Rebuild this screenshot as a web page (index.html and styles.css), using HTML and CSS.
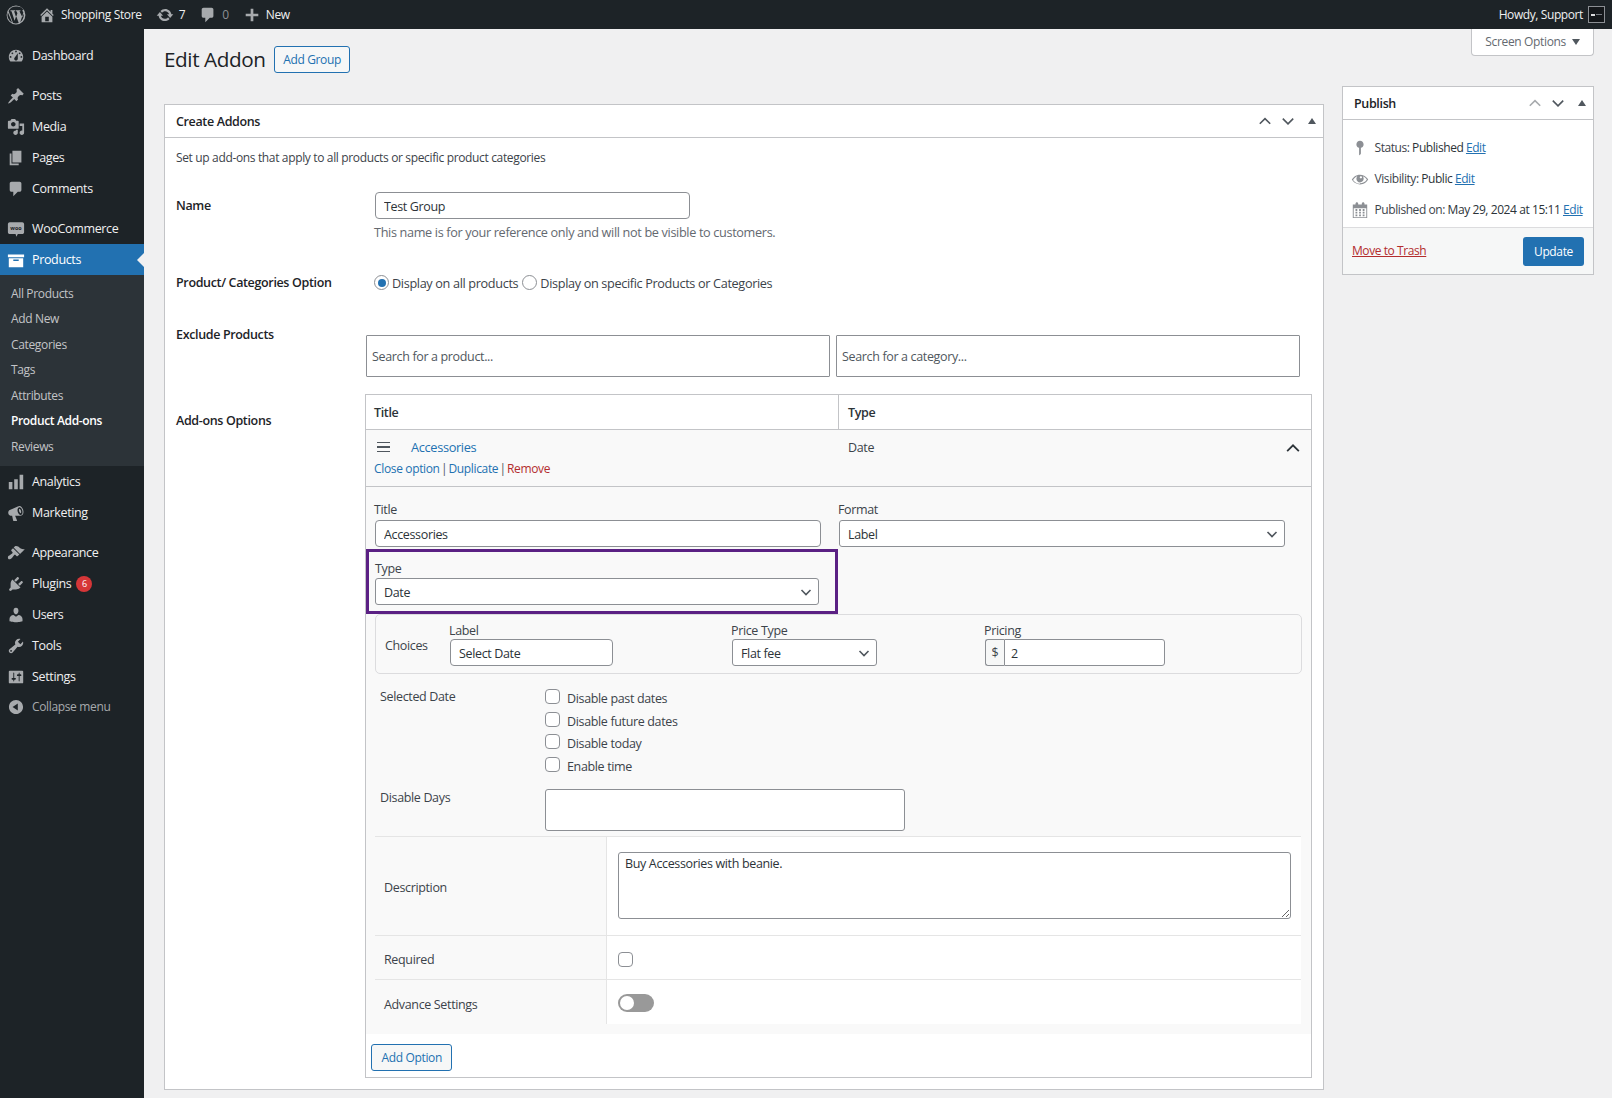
FILE: index.html
```html
<!DOCTYPE html>
<html lang="en">
<head>
  <meta charset="UTF-8">
  <meta name="viewport" content="width=device-width, initial-scale=1.0">
  <title>Edit Addon</title>
  <link rel="stylesheet" href="styles.css">
</head>
<body>

<!-- icon sprite -->
<svg class="sprite" xmlns="http://www.w3.org/2000/svg">
  <symbol id="i-wp" viewBox="0 0 20 20"><path fill-rule="evenodd" d="M10 .6a9.4 9.4 0 1 1 0 18.8A9.4 9.4 0 0 1 10 .6zm0 1A8.4 8.4 0 0 0 2.6 6l4.4 12a8.4 8.4 0 0 0 3 .4 8.4 8.4 0 0 0 2.700-.5L10.200 11l-1.600 4.700L5.500 6.300l-1-.1v-.9h4.600v.9l-1 .1 2 5.900 1.300-3.900-.9-2-.8-.1v-.9h4.700v.9l-1 .1 3 5.900 1-3.200c.4-1.400-.6-2.300-.9-2.900-.3-.6.100-1.700 1.100-1.700A8.400 8.400 0 0 0 10 1.600zm7 5.400c.2 1.300-.1 2.400-.5 3.600l-2.300 6.600A8.400 8.400 0 0 0 17 7zM1.900 7.400a8.400 8.400 0 0 0 4.200 10z"/></symbol>
  <symbol id="i-home" viewBox="0 0 20 20"><path d="M16 8.500l1.530 1.530-1.060 1.060L10 4.620l-6.470 6.470-1.060-1.060L10 2.500l4 4v-2h2v4zm-6-2.460l6 5.990V18H4v-5.970zM12 17v-5H8v5h4z"/></symbol>
  <symbol id="i-update" viewBox="0 0 20 20"><path d="M10.200 3.280c3.530 0 6.430 2.610 6.920 6h2.080l-3.500 4-3.500-4h2.320c-.45-1.970-2.210-3.450-4.320-3.450-1.450 0-2.730.71-3.540 1.780L4.950 5.660C6.230 4.200 8.110 3.280 10.200 3.280zm-.4 13.440c-3.520 0-6.430-2.610-6.920-6H.8l3.500-4c1.170 1.330 2.330 2.670 3.500 4H5.480c.45 1.970 2.210 3.450 4.320 3.450 1.450 0 2.730-.71 3.540-1.780l1.710 1.950c-1.280 1.460-3.150 2.380-5.250 2.380z"/></symbol>
  <symbol id="i-comment" viewBox="0 0 20 20"><path d="M5 2h9c1.100 0 2 .9 2 2v7c0 1.100-.9 2-2 2h-2l-5 5v-5H5c-1.100 0-2-.9-2-2V4c0-1.100.9-2 2-2z"/></symbol>
  <symbol id="i-plus" viewBox="0 0 20 20"><path d="M17 8.500v3h-5.500V17h-3v-5.500H3v-3h5.500V3h3v5.500z"/></symbol>
  <symbol id="i-dashboard" viewBox="0 0 20 20"><path fill-rule="evenodd" d="M3.760 16h12.480c1.100-1.370 1.760-3.110 1.760-5 0-4.420-3.580-8-8-8s-8 3.580-8 8c0 1.890.66 3.630 1.760 5zM10 4c.55 0 1 .45 1 1s-.45 1-1 1-1-.45-1-1 .45-1 1-1zM6 6c.55 0 1 .45 1 1s-.45 1-1 1-1-.45-1-1 .45-1 1-1zm8 0c.55 0 1 .45 1 1s-.45 1-1 1-1-.45-1-1 .45-1 1-1zm-5.370 5.550L12 7v6c0 1.100-.9 2-2 2s-2-.9-2-2c0-.57.24-1.080.63-1.450zM4 10c.55 0 1 .45 1 1s-.45 1-1 1-1-.45-1-1 .45-1 1-1zm12 0c.55 0 1 .45 1 1s-.45 1-1 1-1-.45-1-1 .45-1 1-1z"/></symbol>
  <symbol id="i-pin" viewBox="0 0 20 20"><path d="M10.440 3.020l1.820-1.820 6.360 6.350-1.830 1.820c-1.050-.68-2.480-.57-3.410.36l-.75.75c-.92.93-1.040 2.350-.35 3.410l-1.830 1.820-2.410-2.410-2.800 2.790c-.42.42-3.380 2.710-3.800 2.290s1.860-3.390 2.280-3.810l2.790-2.790L4.100 9.360l1.830-1.820c1.050.69 2.480.57 3.400-.36l.75-.75c.93-.92 1.050-2.350.36-3.410z"/></symbol>
  <symbol id="i-media" viewBox="0 0 20 20"><path fill-rule="evenodd" d="M13 11V4c0-.55-.45-1-1-1h-1.670L9 1H5L3.670 3H2c-.55 0-1 .45-1 1v7c0 .55.45 1 1 1h10c.55 0 1-.45 1-1zM7 4.500c1.380 0 2.500 1.120 2.500 2.500S8.380 9.500 7 9.500 4.500 8.380 4.500 7 5.620 4.500 7 4.500zM14 6h5v10.500c0 1.380-1.120 2.500-2.500 2.500S14 17.880 14 16.500s1.120-2.500 2.500-2.500c.17 0 .34.02.5.05V9h-3V6zm-4 8.050V13h2v3.500c0 1.380-1.120 2.500-2.500 2.500S7 17.880 7 16.500 8.120 14 9.500 14c.17 0 .34.02.5.05z"/></symbol>
  <symbol id="i-pages" viewBox="0 0 20 20"><path d="M6 15V2h10v13H6zm-1 1h8v2H3V5h2v11z"/></symbol>
  <symbol id="i-archive" viewBox="0 0 20 20"><path fill-rule="evenodd" d="M19 4v3H1V4h18zM2 8h16v10H2V8zm11 3V9.500H7V11h6z"/></symbol>
  <symbol id="i-analytics" viewBox="0 0 20 20"><path d="M18 18V2h-4v16h4zm-6 0V7H8v11h4zm-6 0v-8H2v8h4z"/></symbol>
  <symbol id="i-megaphone" viewBox="0 0 20 20"><path fill-rule="evenodd" d="M13 2.400c2.300-.7 4.300 1.700 5 4.400.7 2.700.1 5.400-2 6.100-.3.1-.6.100-1 .1H9l2.200 5.300-.4.500H7.200l-.4-.4L5.700 13H4.300c-1.300.1-2.400-1-2.800-2.500-.4-1.500.1-2.800 1-3.500l9.500-4.200zm.3 1.400c-1.500.4-2 2.500-1.400 4.800.6 2.300 2.200 3.900 3.700 3.500 1.500-.4 2-2.500 1.400-4.800-.6-2.300-2.200-3.900-3.700-3.500zm.5 1.600c.7.200 1.500 1.200 1.800 2.300.3 1.100.2 2.200-.3 2.600-.7-.2-1.500-1.200-1.800-2.300-.3-1.100-.2-2.200.3-2.600z"/></symbol>
  <symbol id="i-brush" viewBox="0 0 20 20"><path d="M14.480 11.060L7.410 3.990l1.500-1.500c.5-.56 2.300-.47 3.510.32 1.210.8 1.430 1.280 2.910 2.100 1.180.64 2.450 1.260 4.450.85zm-.71.71L6.700 4.700 4.930 6.470c-.39.39-.39 1.020 0 1.410l1.060 1.060c.39.39.39 1.030 0 1.420-.6.6-1.430 1.110-2.210 1.690-.35.26-.7.53-1.010.84C1.430 13.230 1 14.090 1 15c0 1 .5 1.700 1 2 1 .3 2.500-.5 3.500-1.500.31-.31.58-.66.84-1.010.58-.78 1.090-1.610 1.690-2.210.39-.39 1.030-.39 1.420 0l1.060 1.060c.39.39 1.020.39 1.410 0z"/></symbol>
  <symbol id="i-plugin" viewBox="0 0 20 20"><path d="M13.110 4.360L9.870 7.600 8 5.730l3.240-3.240c.35-.34 1.050-.2 1.560.32.52.51.66 1.210.31 1.550zm-8 1.770l.91-1.120 9.010 9.010-1.190.84c-.71.71-2.630 1.160-3.820 1.160H6.140L4.900 17.260c-.59.59-1.540.59-2.120 0-.59-.58-.59-1.530 0-2.120l1.240-1.240v-3.880c0-1.130.4-3.190 1.090-3.890zm7.260 3.970l3.240-3.240c.34-.35 1.040-.21 1.550.31.52.51.66 1.210.31 1.550l-3.240 3.250z"/></symbol>
  <symbol id="i-users" viewBox="0 0 20 20"><path d="M10 9.250c-2.270 0-2.730-3.440-2.730-3.440C7 4.020 7.820 2 9.970 2c2.160 0 2.980 2.020 2.710 3.810 0 0-.41 3.440-2.680 3.440zm0 2.570L12.720 10c2.390 0 4.520 2.330 4.520 4.530v2.490s-3.650 1.130-7.240 1.130c-3.650 0-7.240-1.130-7.240-1.130v-2.490c0-2.250 1.940-4.480 4.470-4.480z"/></symbol>
  <symbol id="i-tools" viewBox="0 0 20 20"><path fill-rule="evenodd" d="M16.680 9.770c-1.340 1.340-3.300 1.670-4.950.99l-5.410 6.520c-.99.99-2.590.99-3.580 0s-.99-2.590 0-3.570l6.520-5.420c-.68-1.650-.35-3.610.99-4.950 1.280-1.280 3.120-1.620 4.720-1.060l-2.890 2.890 2.820 2.820 2.860-2.870c.53 1.580.18 3.390-1.080 4.650zM3.810 16.210c.4.39 1.040.39 1.430 0 .4-.4.4-1.040 0-1.430-.39-.4-1.030-.4-1.430 0-.39.39-.39 1.030 0 1.430z"/></symbol>
  <symbol id="i-settings" viewBox="0 0 20 20"><path fill-rule="evenodd" d="M18 16V4c0-.55-.45-1-1-1H3c-.55 0-1 .45-1 1v12c0 .55.45 1 1 1h14c.55 0 1-.45 1-1zM8 11h1c.55 0 1 .45 1 1s-.45 1-1 1H8v1.500c0 .28-.22.5-.5.5s-.5-.22-.5-.5V13H6c-.55 0-1-.45-1-1s.45-1 1-1h1V5.500c0-.28.22-.5.5-.5s.5.22.5.5V11zm5-2h-1c-.55 0-1-.45-1-1s.45-1 1-1h1V5.500c0-.28.22-.5.5-.5s.5.22.5.5V7h1c.55 0 1 .45 1 1s-.45 1-1 1h-1v5.500c0 .28-.22.5-.5.5s-.5-.22-.5-.5V9z"/></symbol>
  <symbol id="i-collapse" viewBox="0 0 20 20"><path fill-rule="evenodd" d="M10 2.160c4.330 0 7.840 3.510 7.840 7.840s-3.510 7.840-7.840 7.840S2.160 14.330 2.160 10 5.710 2.160 10 2.160zm2 11.720V6.120L6.180 9.970z"/></symbol>
  <symbol id="i-status" viewBox="0 0 20 20"><path d="M14 6c0 1.860-1.280 3.410-3 3.860V16c0 1-2 2-2 2V9.860c-1.720-.45-3-2-3-3.860 0-2.210 1.790-4 4-4s4 1.790 4 4z"/></symbol>
  <symbol id="i-eye" viewBox="0 0 20 20"><path fill-rule="evenodd" d="M18.300 9.500C15 4.900 8.500 3.800 3.900 7.200c-1.200.9-2.200 2.100-3 3.400.2.4.5.8.8 1.200 3.300 4.600 9.600 5.600 14.200 2.400.9-.7 1.700-1.400 2.400-2.400.3-.4.5-.8.8-1.200-.3-.4-.5-.8-.8-1.100zm-8.200-2.300c.5-.5 1.300-.5 1.800 0s.5 1.300 0 1.800-1.300.5-1.800 0c-.5-.4-.5-1.300 0-1.800zm-.1 8c-3.100 0-6-1.600-7.700-4.200C3.500 9 5.100 7.800 7 7c-.7.8-1 1.700-1 2.700 0 2.200 1.700 4.100 4 4.100 2.200 0 4.100-1.700 4.100-4 0-1-.3-2-1-2.800 1.900.8 3.400 2 4.500 3.500-1.700 2.700-4.600 4.300-7.600 4.300z"/></symbol>
  <symbol id="i-calendar" viewBox="0 0 20 20"><path fill-rule="evenodd" d="M15 4h3v15H2V4h3V3c0-.41.15-.76.44-1.060.29-.29.65-.44 1.060-.44s.77.15 1.060.44c.29.3.44.65.44 1.060v1h4V3c0-.41.15-.76.44-1.060.29-.29.65-.44 1.060-.44s.77.15 1.060.44c.29.3.44.65.44 1.060v1zm2 14V8H3v10h14zM7 9v2H5V9h2zm2 0h2v2H9V9zm4 2V9h2v2h-2zm-6 1v2H5v-2h2zm2 0h2v2H9v-2zm4 2v-2h2v2h-2zm-6 1v2H5v-2h2zm4 2H9v-2h2v2zm4 0h-2v-2h2v2z"/></symbol>
  <symbol id="i-up" viewBox="0 0 20 20"><path d="M3.500 13.500L10 7l6.500 6.500" fill="none" stroke="currentColor" stroke-width="2"/></symbol>
  <symbol id="i-down" viewBox="0 0 20 20"><path d="M3.500 7L10 13.500 16.500 7" fill="none" stroke="currentColor" stroke-width="2"/></symbol>
</svg>

<!-- Top admin bar -->
<header class="adminbar">
  <div class="adminbar-left">
    <svg class="bar-logo"><use href="#i-wp"/></svg>
    <span class="bar-item"><svg class="bar-icon"><use href="#i-home"/></svg>Shopping Store</span>
    <span class="bar-item"><svg class="bar-icon"><use href="#i-update"/></svg>7</span>
    <span class="bar-item dim"><svg class="bar-icon"><use href="#i-comment"/></svg>0</span>
    <span class="bar-item"><svg class="bar-icon"><use href="#i-plus"/></svg>New</span>
  </div>
  <div class="adminbar-right">
    <span>Howdy, Support</span>
    <span class="avatar"><span class="avatar-mark"></span><span class="avatar-line"></span></span>
  </div>
</header>

<div class="layout">

  <!-- Sidebar menu -->
  <nav class="sidebar">
    <a href="#" class="menu-item"><svg class="menu-icon"><use href="#i-dashboard"/></svg>Dashboard</a>
    <div class="menu-sep"></div>
    <a href="#" class="menu-item"><svg class="menu-icon"><use href="#i-pin"/></svg>Posts</a>
    <a href="#" class="menu-item"><svg class="menu-icon"><use href="#i-media"/></svg>Media</a>
    <a href="#" class="menu-item"><svg class="menu-icon"><use href="#i-pages"/></svg>Pages</a>
    <a href="#" class="menu-item"><svg class="menu-icon"><use href="#i-comment"/></svg>Comments</a>
    <div class="menu-sep"></div>
    <a href="#" class="menu-item">
      <svg class="menu-icon" viewBox="0 0 20 20"><path d="M3 2.500h14c1 0 2 1 2 2v9c0 1-1 2-2 2h-5l-1.500 3-1-3H3c-1 0-2-1-2-2v-9c0-1 1-2 2-2z"/><text class="woo-mark" x="10" y="11.500" text-anchor="middle">woo</text></svg>
      WooCommerce
    </a>
    <a href="#" class="menu-item current"><svg class="menu-icon"><use href="#i-archive"/></svg>Products</a>
    <div class="submenu">
      <a href="#">All Products</a>
      <a href="#">Add New</a>
      <a href="#">Categories</a>
      <a href="#">Tags</a>
      <a href="#">Attributes</a>
      <a href="#" class="sub-current">Product Add-ons</a>
      <a href="#">Reviews</a>
    </div>
    <a href="#" class="menu-item"><svg class="menu-icon"><use href="#i-analytics"/></svg>Analytics</a>
    <a href="#" class="menu-item"><svg class="menu-icon"><use href="#i-megaphone"/></svg>Marketing</a>
    <div class="menu-sep"></div>
    <a href="#" class="menu-item"><svg class="menu-icon"><use href="#i-brush"/></svg>Appearance</a>
    <a href="#" class="menu-item"><svg class="menu-icon"><use href="#i-plugin"/></svg>Plugins<span class="badge">6</span></a>
    <a href="#" class="menu-item"><svg class="menu-icon"><use href="#i-users"/></svg>Users</a>
    <a href="#" class="menu-item"><svg class="menu-icon"><use href="#i-tools"/></svg>Tools</a>
    <a href="#" class="menu-item"><svg class="menu-icon"><use href="#i-settings"/></svg>Settings</a>
    <a href="#" class="menu-item collapse"><svg class="menu-icon"><use href="#i-collapse"/></svg>Collapse menu</a>
  </nav>

  <!-- Main content -->
  <main class="content">
    <div class="col-main">
      <div class="page-title">
        <h1>Edit Addon</h1>
        <a href="#" class="btn-outline">Add Group</a>
      </div>

      <section class="box">
        <div class="box-head">
          <h2>Create Addons</h2>
          <div class="box-arrows">
            <svg class="arrow"><use href="#i-up"/></svg>
            <svg class="arrow"><use href="#i-down"/></svg>
            <span class="tri"></span>
          </div>
        </div>

        <div class="box-body">
          <p class="intro">Set up add-ons that apply to all products or specific product categories</p>

          <div class="form-row row-name">
            <label class="row-label">Name</label>
            <div class="row-field">
              <input type="text" class="text-input name-input" value="Test Group">
              <p class="hint">This name is for your reference only and will not be visible to customers.</p>
            </div>
          </div>

          <div class="form-row row-option">
            <label class="row-label">Product/ Categories Option</label>
            <div class="row-field radio-group">
              <label class="radio-label"><input type="radio" name="scope" class="radio" checked> Display on all products</label>
              <label class="radio-label"><input type="radio" name="scope" class="radio"> Display on specific Products or Categories</label>
            </div>
          </div>

          <div class="form-row row-exclude">
            <label class="row-label">Exclude Products</label>
            <div class="search-pair">
              <input type="text" class="search-input" placeholder="Search for a product...">
              <input type="text" class="search-input" placeholder="Search for a category...">
            </div>
          </div>

          <div class="form-row row-addons">
            <label class="row-label addons-label">Add-ons Options</label>

            <div class="addon-table">
              <div class="addon-head">
                <div class="head-title">Title</div>
                <div class="head-type">Type</div>
              </div>

              <div class="addon-row">
                <div class="addon-row-main">
                  <div class="addon-name">
                    <span class="drag"><span></span><span></span><span></span></span>
                    <a href="#">Accessories</a>
                  </div>
                  <div class="addon-links">
                    <a href="#">Close option</a> <span class="sep">|</span> <a href="#">Duplicate</a> <span class="sep">|</span> <a href="#" class="danger">Remove</a>
                  </div>
                </div>
                <div class="addon-type">Date</div>
                <svg class="addon-toggle"><use href="#i-up"/></svg>
              </div>

              <div class="addon-edit">
                <div class="edit-top">
                  <div class="field title-field">
                    <label>Title</label>
                    <input type="text" class="text-input" value="Accessories">
                  </div>
                  <div class="field format-field">
                    <label>Format</label>
                    <select class="select"><option>Label</option></select>
                  </div>
                </div>

                <div class="type-highlight">
                  <label>Type</label>
                  <select class="select"><option>Date</option></select>
                </div>

                <div class="choices">
                  <div class="choices-name">Choices</div>
                  <div class="field choice-label">
                    <label>Label</label>
                    <input type="text" class="text-input" value="Select Date">
                  </div>
                  <div class="field choice-price">
                    <label>Price Type</label>
                    <select class="select"><option>Flat fee</option></select>
                  </div>
                  <div class="field choice-pricing">
                    <label>Pricing</label>
                    <div class="price-group">
                      <span class="currency">$</span>
                      <input type="text" class="text-input" value="2">
                    </div>
                  </div>
                </div>

                <div class="date-row selected-row">
                  <div class="date-label">Selected Date</div>
                  <div class="check-list">
                    <label class="check"><input type="checkbox" class="checkbox"><span>Disable past dates</span></label>
                    <label class="check"><input type="checkbox" class="checkbox"><span>Disable future dates</span></label>
                    <label class="check"><input type="checkbox" class="checkbox"><span>Disable today</span></label>
                    <label class="check"><input type="checkbox" class="checkbox"><span>Enable time</span></label>
                  </div>
                </div>

                <div class="date-row days-row">
                  <div class="date-label">Disable Days</div>
                  <div class="days-box"></div>
                </div>

                <div class="settings-table">
                  <div class="set-label set-desc">Description</div>
                  <div class="set-value set-desc"><textarea class="desc-input">Buy Accessories with beanie.</textarea></div>
                  <div class="set-label set-req">Required</div>
                  <div class="set-value set-req"><input type="checkbox" class="checkbox"></div>
                  <div class="set-label set-adv">Advance Settings</div>
                  <div class="set-value set-adv"><span class="switch"><span class="knob"></span></span></div>
                </div>
              </div>

              <div class="addon-foot">
                <a href="#" class="btn-outline">Add Option</a>
              </div>
            </div>
          </div>
        </div>
      </section>
    </div>

    <aside class="col-side">
      <div class="screen-options">Screen Options <span class="tri-down"></span></div>

      <section class="box publish">
        <div class="box-head">
          <h2>Publish</h2>
          <div class="box-arrows">
            <svg class="arrow faded"><use href="#i-up"/></svg>
            <svg class="arrow"><use href="#i-down"/></svg>
            <span class="tri"></span>
          </div>
        </div>
        <div class="publish-body">
          <div class="pub-line"><svg class="pub-icon"><use href="#i-status"/></svg>Status: <b>Published</b> <a href="#">Edit</a></div>
          <div class="pub-line"><svg class="pub-icon"><use href="#i-eye"/></svg>Visibility: <b>Public</b> <a href="#">Edit</a></div>
          <div class="pub-line"><svg class="pub-icon"><use href="#i-calendar"/></svg>Published on: <b>May 29, 2024 at 15:11</b> <a href="#">Edit</a></div>
        </div>
        <div class="publish-foot">
          <a href="#" class="trash">Move to Trash</a>
          <a href="#" class="btn-primary">Update</a>
        </div>
      </section>
    </aside>
  </main>
</div>

</body>
</html>
```

FILE: styles.css
```css
/* General reset */
* {
  margin: 0;
  padding: 0;
  box-sizing: border-box;
}

body {
  font-family: "Open Sans", "Noto Sans", Arial, sans-serif;
  font-size: 12.5px;
  letter-spacing: -0.35px;
  line-height: 18px;
  color: #3c434a;
  background-color: #f0f0f1;
}

a {
  color: #2271b1;
  text-decoration: none;
}

input, select, textarea {
  font-family: inherit;
  font-size: 12.5px;
  letter-spacing: inherit;
  color: #2c3338;
}

.sprite {
  display: none;
}

/* Top admin bar */
.adminbar {
  height: 29px;
  background-color: #1d2327;
  color: #f0f0f1;
  font-size: 12px;
  display: flex;
  justify-content: space-between;
  align-items: center;
  padding: 0 7px 0 6px;
}

.adminbar-left,
.adminbar-right,
.bar-item {
  display: flex;
  align-items: center;
}

.bar-logo {
  width: 20px;
  height: 20px;
  fill: #a7aaad;
  margin-right: 12px;
}

.bar-item {
  margin-right: 14px;
}

.bar-icon {
  width: 18px;
  height: 18px;
  fill: #a7aaad;
  margin-right: 5px;
}

.bar-item.dim {
  color: #8c8f94;
}

.adminbar-right {
  gap: 5px;
  letter-spacing: -0.4px;
}

.avatar {
  width: 17px;
  height: 17px;
  border: 1px solid #8c8f94;
  background-color: #14171a;
  display: flex;
  align-items: center;
  gap: 1px;
  padding-left: 2px;
}

.avatar-mark {
  width: 4px;
  height: 2px;
  background-color: #dcdcde;
}

.avatar-line {
  width: 6px;
  height: 1px;
  background-color: #787c82;
}

/* Sidebar */
.layout {
  display: flex;
  min-height: 1069px;
}

.sidebar {
  width: 144px;
  flex-shrink: 0;
  background-color: #1d2327;
  padding-top: 11px;
}

.menu-item {
  position: relative;
  height: 31px;
  display: flex;
  align-items: center;
  color: #f0f0f1;
  padding-left: 7px;
}

.menu-icon {
  width: 18px;
  height: 18px;
  fill: #a7aaad;
  margin-right: 7px;
  flex-shrink: 0;
}

.woo-mark {
  font-size: 6px;
  font-weight: 700;
  fill: #1d2327;
  letter-spacing: 0;
}

.menu-sep {
  height: 9px;
}

.menu-item.current {
  background-color: #2271b1;
  color: #fff;
}

.menu-item.current .menu-icon {
  fill: #fff;
}

/* little notch pointing at the page */
.menu-item.current::after {
  content: "";
  position: absolute;
  right: 0;
  top: 9px;
  border: 7px solid transparent;
  border-right-color: #f0f0f1;
  border-left-width: 0;
}

.submenu {
  background-color: #2c3338;
  padding: 5.5px 0 7px;
}

.submenu a {
  display: block;
  height: 25.5px;
  line-height: 25.5px;
  padding-left: 11px;
  color: #c3c4c7;
  font-size: 12px;
}

.submenu a.sub-current {
  color: #fff;
  font-weight: 600;
}

.badge {
  width: 16px;
  height: 16px;
  line-height: 16px;
  margin-left: 5px;
  border-radius: 50%;
  background-color: #d63638;
  color: #fff;
  font-size: 9px;
  letter-spacing: 0;
  text-align: center;
}

.menu-item.collapse {
  color: #a7aaad;
  font-size: 12px;
  height: 30px;
}

/* Main area */
.content {
  flex: 1;
  display: grid;
  grid-template-columns: 1160px 252px;
  column-gap: 18px;
  padding-left: 20px;
  align-items: start;
}

.page-title {
  height: 75px;
  padding-top: 17px;
  display: flex;
  align-items: flex-start;
  gap: 8px;
}

h1 {
  font-size: 20.7px;
  font-weight: 400;
  line-height: 27px;
  color: #1d2327;
  letter-spacing: -0.4px;
}

.btn-outline {
  display: inline-block;
  height: 27px;
  line-height: 25px;
  padding: 0 8.5px;
  border: 1px solid #2271b1;
  border-radius: 3px;
  background-color: #f6f7f7;
  color: #2271b1;
  font-size: 12px;
}

/* Postbox */
.box {
  background-color: #fff;
  border: 1px solid #c3c4c7;
}

.box-head {
  height: 33px;
  border-bottom: 1px solid #c3c4c7;
  display: flex;
  justify-content: space-between;
  align-items: center;
  padding: 0 7px 0 11px;
}

h2 {
  font-size: 12.5px;
  font-weight: 600;
  color: #1d2327;
  padding-top: 2px;
}

.box-arrows {
  display: flex;
  align-items: center;
  gap: 7px;
}

.arrow {
  width: 16px;
  height: 16px;
  color: #50575e;
}

.arrow.faded {
  color: #a7aaad;
}

.tri {
  width: 0;
  height: 0;
  margin-left: 5px;
  border: 4px solid transparent;
  border-top-width: 0;
  border-bottom: 6px solid #50575e;
}

.box-body {
  padding: 11px;
}

.intro {
  font-size: 12px;
}

.form-row {
  display: grid;
  grid-template-columns: 189px 1fr;
}

.row-label {
  font-weight: 600;
  color: #1d2327;
}

.row-name {
  margin-top: 25px;
}

.row-name .row-label {
  padding-top: 5px;
}

.row-field {
  padding-left: 10px;
}

.text-input {
  height: 27px;
  width: 100%;
  padding: 2px 8px 0;
  border: 1px solid #8c8f94;
  border-radius: 4px;
  background-color: #fff;
}

.name-input {
  width: 315px;
  display: block;
}

.hint {
  margin-top: 4px;
  margin-left: -1px;
  color: #646970;
  font-size: 12.7px;
}

.row-option {
  margin-top: 31.5px;
}

.row-option .row-label {
  padding-top: 1px;
}

.radio-group {
  display: flex;
  align-items: center;
  gap: 4px;
  height: 20px;
  font-size: 12.7px;
  margin-left: -1px;
}

.radio-label {
  display: flex;
  align-items: center;
  gap: 3px;
}

.radio {
  appearance: none;
  width: 15px;
  height: 15px;
  border: 1px solid #8c8f94;
  border-radius: 50%;
  background-color: #fff;
  display: grid;
  place-items: center;
}

.radio:checked::before {
  content: "";
  width: 8px;
  height: 8px;
  border-radius: 50%;
  background-color: #2271b1;
}

.row-exclude {
  margin-top: 32.5px;
}

.row-exclude .row-label {
  padding-top: 1px;
}

.search-pair {
  margin-top: 10px;
  margin-left: 1px;
  display: flex;
  gap: 6px;
}

.search-input {
  width: 464px;
  height: 42px;
  padding: 0 5px;
  border: 1px solid #8c8f94;
  border-radius: 1px;
  background-color: #fff;
}

.search-input::placeholder {
  color: #50575e;
  opacity: 1;
}

.row-addons {
  margin-top: 17px;
}

.addons-label {
  padding-top: 18px;
}

/* Add-ons table */
.addon-table {
  width: 947px;
  border: 1px solid #c3c4c7;
}

.addon-head {
  height: 35px;
  display: grid;
  grid-template-columns: 473px 1fr;
  align-items: stretch;
  border-bottom: 1px solid #c3c4c7;
  font-weight: 600;
  color: #2c3338;
}

.head-title {
  padding: 9px 8px;
  border-right: 1px solid #c3c4c7;
}

.head-type {
  padding: 9px 9px;
}

.addon-row {
  position: relative;
  height: 57px;
  display: grid;
  grid-template-columns: 472px 1fr;
  background-color: #f9f9f9;
  border-bottom: 1px solid #c3c4c7;
  padding-top: 8px;
}

.addon-row-main {
  padding-left: 8px;
}

.addon-name {
  display: flex;
  align-items: center;
  gap: 21px;
  padding-left: 3px;
  font-size: 12.8px;
  font-weight: 500;
}

.drag {
  width: 13px;
  display: flex;
  flex-direction: column;
  gap: 3px;
}

.drag span {
  height: 1.500px;
  background-color: #50575e;
}

.addon-links {
  margin-top: 4px;
  color: #50575e;
  font-size: 12px;
}

.sep {
  margin: 0 -1.5px;
}

.danger {
  color: #b32d2e;
}

.addon-type {
  padding: 1px 0 0 10px;
}

.addon-toggle {
  position: absolute;
  right: 9px;
  top: 9px;
  width: 18px;
  height: 18px;
  color: #2c3338;
}

.addon-edit {
  height: 547px;
  background-color: #f9f9f9;
  padding: 13px 9px 0 9px;
}

.edit-top {
  display: flex;
}

.field {
  display: flex;
  flex-direction: column;
}

.field label {
  line-height: 18px;
  margin-left: -1px;
  height: 20px;
  padding-top: 1px;
}

.title-field {
  width: 464px;
}

.title-field .text-input {
  width: 446px;
}

.format-field {
  width: 446px;
}

.select {
  appearance: none;
  width: 100%;
  height: 27px;
  padding: 2px 24px 0 8px;
  border: 1px solid #8c8f94;
  border-radius: 3px;
  background: #fff url("data:image/svg+xml,%3Csvg xmlns='http://www.w3.org/2000/svg' width='16' height='16'%3E%3Cpath d='M3.500 6L8 10.500 12.500 6' fill='none' stroke='%2350575e' stroke-width='1.600'/%3E%3C/svg%3E") no-repeat right 4px center;
}

.type-highlight {
  width: 472px;
  height: 65px;
  margin: 2px 0 0 -9px;
  padding: 8px 0 0 6px;
  border: 3px solid #5b2184;
}

.type-highlight label {
  display: block;
  height: 18px;
  line-height: 18px;
}

.type-highlight .select {
  width: 444px;
}

.choices {
  width: 927px;
  height: 60px;
  border: 1px solid #dcdcde;
  border-radius: 5px;
  display: flex;
  padding: 7px 0 0 9px;
}

.choices-name {
  width: 65px;
  padding-top: 15px;
}

.choices .field label {
  height: 17px;
  line-height: 17px;
  padding-top: 0;
}

.choice-label {
  width: 282px;
}

.choice-label .text-input {
  width: 163px;
}

.choice-price {
  width: 253px;
}

.choice-price .select {
  width: 145px;
}

.choice-pricing {
  width: 180px;
}

.price-group {
  display: flex;
}

.currency {
  width: 19px;
  height: 27px;
  line-height: 25px;
  text-align: center;
  border: 1px solid #8c8f94;
  border-right: 0;
  border-radius: 3px 0 0 3px;
  background-color: #f6f7f7;
}

.price-group .text-input {
  width: 161px;
  padding-left: 6px;
  border-radius: 0 3px 3px 0;
}

.date-row {
  display: flex;
  padding-left: 5px;
}

.date-label {
  width: 165px;
}

.selected-row {
  margin-top: 14px;
}

.check-list {
  display: flex;
  flex-direction: column;
}

.check {
  height: 22.500px;
  display: flex;
  align-items: flex-start;
  gap: 7px;
}

.check span {
  margin-top: 2px;
}

.check .checkbox {
  margin-top: 1px;
}

.checkbox {
  appearance: none;
  width: 15px;
  height: 15px;
  border: 1px solid #8c8f94;
  border-radius: 4px;
  background-color: #fff;
}

.days-row {
  margin-top: 11px;
}

.days-box {
  width: 360px;
  height: 42px;
  background-color: #fff;
  border: 1px solid #8c8f94;
  border-radius: 3px;
}

.settings-table {
  width: 926px;
  margin-top: 5px;
  display: grid;
  grid-template-columns: 232px 1fr;
  border-top: 1px solid #e5e5e5;
}

.set-label {
  display: flex;
  align-items: center;
  padding-left: 9px;
  border-right: 1px solid #e5e5e5;
}

.set-value {
  display: flex;
  align-items: center;
  padding-left: 11px;
  background-color: #fff;
}

.set-desc {
  height: 99px;
  border-bottom: 1px solid #e5e5e5;
}

.set-label.set-desc {
  padding-top: 3px;
}

.set-value.set-desc {
  padding-bottom: 2px;
}

.set-req {
  height: 44px;
  border-bottom: 1px solid #e5e5e5;
  padding-top: 4px;
}

.set-adv {
  height: 44px;
}

.set-label.set-adv {
  padding-top: 6px;
}

.desc-input {
  width: 673px;
  height: 67px;
  padding: 2px 6px;
  border: 1px solid #8c8f94;
  border-radius: 3px;
  background-color: #fff;
  line-height: 18px;
}

.switch {
  display: block;
  width: 36px;
  height: 18px;
  margin-top: 1px;
  padding: 2px;
  border-radius: 9px;
  background-color: #999;
}

.knob {
  display: block;
  width: 14px;
  height: 14px;
  border-radius: 50%;
  background-color: #fff;
}

.addon-foot {
  height: 43px;
  background-color: #fff;
  padding: 10px 0 0 5px;
}

.addon-foot .btn-outline {
  padding: 0 9.5px;
}

/* Right column */
.col-side {
  display: flex;
  flex-direction: column;
  align-items: flex-end;
}

.screen-options {
  height: 27px;
  width: 123px;
  line-height: 25px;
  background-color: #fff;
  border: 1px solid #c3c4c7;
  border-top: 0;
  border-radius: 0 0 4px 4px;
  color: #646970;
  font-size: 12px;
  text-align: center;
}

.tri-down {
  display: inline-block;
  margin-left: 3px;
  vertical-align: 1px;
  border: 4px solid transparent;
  border-bottom-width: 0;
  border-top: 6px solid #50575e;
}

.publish {
  width: 252px;
  margin-top: 30px;
}

.publish-body {
  padding: 16px 9px 0 8px;
}

.pub-line {
  height: 31px;
  display: flex;
  align-items: center;
  gap: 2.5px;
  white-space: nowrap;
  padding-bottom: 7px;
  font-size: 12px;
  letter-spacing: -0.42px;
}

.pub-line:last-child {
  height: 29px;
  padding-bottom: 5px;
}

.pub-icon {
  width: 18px;
  height: 18px;
  fill: #8c8f94;
  margin-right: 3px;
  flex-shrink: 0;
}

.pub-line b {
  font-weight: 500;
  color: #2c3338;
}

.pub-line a {
  text-decoration: underline;
}

.publish-foot {
  height: 47px;
  background-color: #f6f7f7;
  border-top: 1px solid #dcdcde;
  display: flex;
  justify-content: space-between;
  align-items: center;
  padding: 0 9px;
  font-size: 12px;
}

.trash {
  color: #b32d2e;
  text-decoration: underline;
  letter-spacing: -0.42px;
}

.btn-primary {
  height: 29px;
  line-height: 29px;
  padding: 0 11px;
  border-radius: 3px;
  background-color: #2271b1;
  color: #fff;
}
```
